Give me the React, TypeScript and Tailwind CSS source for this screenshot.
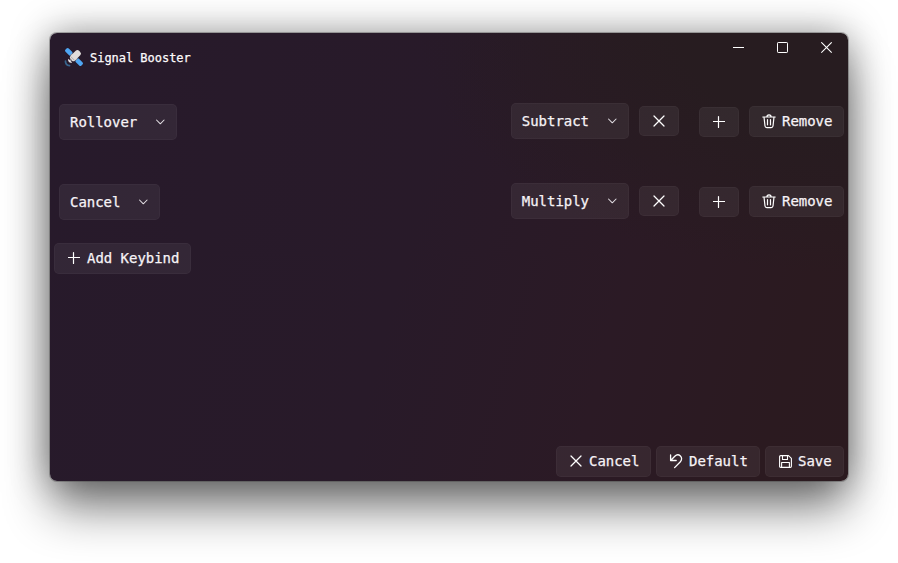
import type { ReactNode } from 'react';

const button =
  'flex shrink-0 items-center rounded-[5px] border border-white/[0.03] bg-white/[0.06] whitespace-pre';

function Chevron() {
  return (
    <svg width="10" height="6" viewBox="0 0 10 6" fill="none" stroke="#e3dfe4" strokeWidth="1.05" strokeLinecap="round" strokeLinejoin="round">
      <path d="M1.5 1L5.3 4.8 9.1 1" />
    </svg>
  );
}

function Cross() {
  return (
    <svg width="12" height="12" viewBox="0 0 12 12" fill="none" stroke="#fff" strokeWidth="1.25" strokeLinecap="round">
      <path d="M1 1l10 10M11 1L1 11" />
    </svg>
  );
}

function Plus() {
  return (
    <svg width="12" height="12" viewBox="0 0 12 12" fill="none" stroke="#fff" strokeWidth="1.2" strokeLinecap="round">
      <path d="M5.5.6v10.8M.4 5.5h11.2" />
    </svg>
  );
}

function Trash() {
  return (
    <svg width="14" height="15" viewBox="0 0 14 15" fill="none" stroke="#fff" strokeWidth="1.2" strokeLinecap="round" strokeLinejoin="round">
      <path d="M.8 3h12.4M4.9 3c0-2.9 4.2-2.9 4.2 0M2 3l1 9c.1 1 .8 1.6 1.8 1.6h4.4c1 0 1.7-.6 1.8-1.6L12 3M5.5 5.6v5.2M8.5 5.6v5.2" />
    </svg>
  );
}

function Undo() {
  return (
    <svg width="14" height="15" viewBox="0 0 14 15" fill="none" stroke="#fff" strokeWidth="1.3" strokeLinecap="round" strokeLinejoin="round">
      <path d="M1.6.9v5.6h5.6M1.9 6.2L5.8 2.3c1.7-1.7 4.1-1.7 5.6-.3 1.6 1.6 1.6 4.1 0 5.7l-5.8 5.9" />
    </svg>
  );
}

function Floppy() {
  return (
    <svg width="13" height="13" viewBox="0 0 13 13" fill="none" stroke="#fff" strokeWidth="1.1" strokeLinejoin="round">
      <path d="M1.7.6h7.8l2.9 2.8v7.9c0 .7-.4 1.1-1.1 1.1H1.7c-.7 0-1.1-.4-1.1-1.1V1.7C.6 1 1 .6 1.7.6z" />
      <path d="M3.5.6v3.9h5V.6M2.6 12.4V7.5h7.8v4.9" />
    </svg>
  );
}

function Satellite() {
  return (
    <svg width="20" height="20" viewBox="0 0 20 20">
      <g transform="rotate(-45 10 10)">
        <rect x="7.7" y="-1.3" width="4.6" height="7.9" rx="1.6" fill="#4fa6f3" />
        <rect x="7.7" y="13.4" width="4.6" height="7.9" rx="1.6" fill="#4fa6f3" />
        <path d="M8.9 6h2.2v8H8.9z" fill="#858189" />
        <rect x="6" y="6.8" width="12" height="6.4" rx="2.4" fill="#e0dddc" />
        <path d="M8 7.4v5.2" stroke="#aaa6a9" strokeWidth=".8" />
        <path d="M4.8 7.4C3.2 8 2.9 9 2.9 10s.3 2 1.9 2.6z" fill="#eeeaea" />
        <path d="M4.6 10h2" stroke="#aaa6a9" strokeWidth="1.3" />
      </g>
      <path d="M1.5 14.2c0 2.5 1.5 4.2 4 4.4" fill="none" stroke="#38658d" strokeWidth="1.8" strokeLinecap="round" />
    </svg>
  );
}

function Select({ label }: { label: string }) {
  return (
    <button className={`${button} h-9 gap-[18px] pr-[11px] pl-2.5`}>
      <span>{label}</span>
      <Chevron />
    </button>
  );
}

function Action({ icon, label, width }: { icon: ReactNode; label: string; width: string }) {
  return (
    <button className={`${button} h-[31px] ${width} gap-1.5 pb-px pl-3`}>
      <span className="flex w-[14px] shrink-0 justify-center">{icon}</span>
      <span>{label}</span>
    </button>
  );
}

function Keybind({ action, operator }: { action: string; operator: string }) {
  return (
    <div className="flex h-20 items-start justify-between pr-1 pl-[9px]">
      <div className="pt-px">
        <Select label={action} />
      </div>
      <div className="flex items-start">
        <Select label={operator} />
        <button className={`${button} mt-[3px] ml-2.5 h-[30px] w-10 justify-center`}>
          <Cross />
        </button>
        <button className={`${button} mt-1 ml-5 h-[30px] w-10 justify-center`}>
          <Plus />
        </button>
        <div className="mt-[3px] ml-2.5">
          <Action icon={<Trash />} label="Remove" width="w-[95px]" />
        </div>
      </div>
    </div>
  );
}

export default function App() {
  return (
    <div className="h-[563px] w-[898px] overflow-hidden bg-white px-[50px] pt-[33px]">
      <main className="flex h-[448px] w-[798px] flex-col rounded-[7px] bg-[radial-gradient(ellipse_at_100%_0%,#271c20_0%,#271c20_15%,transparent_38%),linear-gradient(105deg,#271a2b_0%,#281a29_45%,#2b1a25_70%,#2b1a20_90%,#2b1a1f_100%)] font-['DejaVu_Sans_Mono','Liberation_Mono',monospace] text-[14px] leading-[18px] tracking-[-0.03px] text-[#f7f3f7] shadow-[0_0_0_1px_rgba(60,60,60,0.35),0_0_38px_rgba(0,0,0,0.4),0_30px_48px_-2px_rgba(0,0,0,0.48)] [-webkit-text-stroke:0.25px_#f7f3f7]">
        <header className="flex h-[70px] shrink-0 items-start justify-between rounded-t-[7px]">
          <div className="flex items-center gap-1.5 pt-[14px] pl-[14px] text-[12px] text-white">
            <Satellite />
            <h1 className="pt-0.5">Signal Booster</h1>
          </div>
          <nav className="flex gap-8 pt-[9px] pr-[15px]">
            <svg width="12" height="12" viewBox="0 0 12 12" stroke="#fff">
              <path d="M0 5.5h11" />
            </svg>
            <svg width="12" height="12" viewBox="0 0 12 12" fill="none" stroke="#fff">
              <rect x=".5" y=".5" width="10" height="10" rx=".7" />
            </svg>
            <svg width="12" height="12" viewBox="0 0 12 12" stroke="#fff" strokeWidth="1.1">
              <path d="M.3.3l10.4 10.4M10.7.3L.3 10.7" />
            </svg>
          </nav>
        </header>
        <Keybind action="Rollover" operator="Subtract" />
        <Keybind action="Cancel" operator="Multiply" />
        <div className="-mt-5 pl-1">
          <Action icon={<Plus />} label="Add Keybind" width="w-[137px]" />
        </div>
        <footer className="mt-auto flex justify-end gap-[5px] pr-1 pb-1">
          <Action icon={<Cross />} label="Cancel" width="w-[95px]" />
          <Action icon={<Undo />} label="Default" width="w-[104px]" />
          <Action icon={<Floppy />} label="Save" width="w-[79px]" />
        </footer>
      </main>
    </div>
  );
}
